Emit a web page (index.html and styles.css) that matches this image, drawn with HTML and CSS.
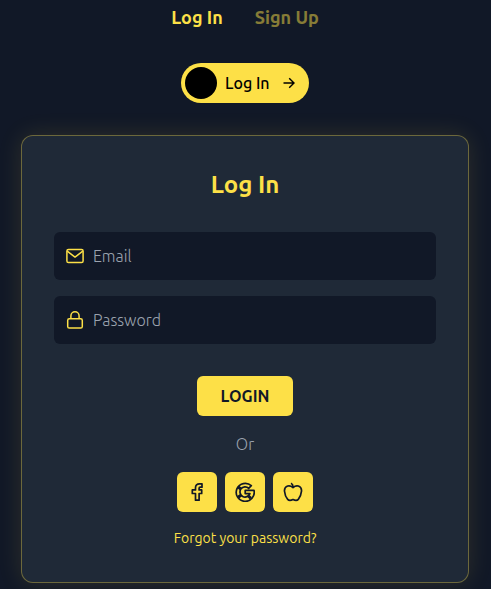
FILE: index.html
```html
<!DOCTYPE html>
<html lang="en">
<head>
<meta charset="utf-8">
<meta name="viewport" content="width=device-width, initial-scale=1">
<title>Log In</title>
<link rel="stylesheet" href="styles.css">
</head>
<body>
<main class="page">
  <nav class="tabs">
    <a class="tab tab-active" href="#login">Log In</a>
    <a class="tab" href="#signup">Sign Up</a>
  </nav>
  <button class="switch" type="button">
    <span class="knob"></span>
    <span class="switch-label">Log In</span>
    <svg class="arrow" viewBox="0 0 16 16" aria-hidden="true"><path d="M2.500 8h10.500M8.200 3.200 13 8l-4.800 4.800"/></svg>
  </button>
  <form class="card" id="login">
    <h1 class="title">Log In</h1>
    <div class="fields">
      <label class="field">
        <svg class="icon" viewBox="0 0 20 20" aria-hidden="true"><rect x="1.900" y="3.400" width="16.200" height="13.200" rx="1.600"/><path d="m2.200 5.200 7.800 5.900 7.800-5.900"/></svg>
        <input class="input" type="email" placeholder="Email" aria-label="Email">
      </label>
      <label class="field">
        <svg class="icon" viewBox="0 0 20 20" aria-hidden="true"><rect x="2.700" y="8.800" width="14.600" height="9.200" rx="1.600"/><path d="M5.900 8.800V5.900a4.100 4.100 0 0 1 8.200 0v2.900"/></svg>
        <input class="input" type="password" placeholder="Password" aria-label="Password">
      </label>
    </div>
    <button class="submit" type="submit">LOGIN</button>
    <p class="or">Or</p>
    <div class="socials">
      <button class="social" type="button" aria-label="Facebook">
        <svg class="icon" viewBox="0 0 20 20" aria-hidden="true"><path d="M15 1.800h-2.600c-2.400 0-3.900 1.600-3.900 3.900v2.200H5.300v3.600h3.200v6.700h3.600v-6.700h2.600v-3.600h-2.600V6.300c0-.7.4-1.100 1.100-1.100H15z"/></svg>
      </button>
      <button class="social" type="button" aria-label="Google">
        <svg class="icon" viewBox="0 0 20 20" aria-hidden="true"><path d="M16.300 3.700A9 9 0 1 0 19 8.300h-8.800v3.300h4.700a5.100 5.100 0 1 1-1.200-5.300z"/><path class="seam" d="m3.200 5 2.700 2M3.200 15.200l2.700-2M13.400 14l2.500 2.400"/></svg>
      </button>
      <button class="social" type="button" aria-label="Apple">
        <svg class="icon" viewBox="0 0 20 20" aria-hidden="true"><path d="M10 5.500C8.300 4.100 6.400 3.500 4.700 4 2.400 4.700 1.300 6.700 1.500 9.200c.3 3.100 1.500 6.200 3.200 8.200 1.300 1.500 3.100 1.300 5.300.1 2.200 1.200 4 1.400 5.300-.1 1.700-2 2.900-5.100 3.200-8.200.2-2.500-.9-4.500-3.200-5.200-1.700-.5-3.600.1-5.300 1.500zM10 5.500C10.200 3.500 9.500 2 8 1.300"/></svg>
      </button>
    </div>
    <a class="forgot" href="#forgot">Forgot your password?</a>
  </form>
</main>
</body>
</html>
```
FILE: styles.css
```css
* { box-sizing: border-box; }

body {
  margin: 0;
  background: #111827;
  color: #fde047;
  font-family: Ubuntu, "Noto Sans", "Open Sans", sans-serif;
  font-size: 16px;
  line-height: 24px;
}

button, input { font: inherit; }
button { border: 0; cursor: pointer; }
a { color: inherit; text-decoration: none; }

.page {
  display: flex;
  flex-direction: column;
  align-items: center;
  padding: 4px 17px 6px 16px;
}

.tabs {
  display: flex;
  gap: 32px;
  font-size: 18px;
  font-weight: 700;
  line-height: 27px;
}

.tab { opacity: 0.5; }
.tab-active { opacity: 1; }

.switch {
  display: flex;
  align-items: center;
  gap: 8px;
  width: 128px;
  height: 40px;
  margin: 32px 0;
  padding: 4px 12px 4px 4px;
  border-radius: 20px;
  background: #fde047;
  color: #000;
  font-weight: 500;
  white-space: nowrap;
}

.knob {
  flex: none;
  width: 32px;
  height: 32px;
  border-radius: 50%;
  background: #000;
}

.arrow {
  flex: none;
  width: 16px;
  height: 16px;
  margin-left: auto;
  fill: none;
  stroke: currentColor;
  stroke-width: 1.4;
}

.card {
  display: flex;
  flex-direction: column;
  align-items: center;
  width: 100%;
  max-width: 448px;
  padding: 32px 32px 34px;
  border: 1px solid rgba(253, 224, 71, 0.35);
  border-radius: 12px;
  background: #1f2937;
  box-shadow: 0 0 24px rgba(253, 224, 71, 0.12);
}

.title {
  margin: 0 0 30px;
  font-size: 24px;
  font-weight: 700;
  line-height: 34px;
}

.fields {
  display: grid;
  gap: 16px;
  width: 100%;
}

.field {
  display: flex;
  align-items: center;
  gap: 8px;
  height: 48px;
  padding: 0 11px;
  border-radius: 6px;
  background: #111827;
}

.icon {
  flex: none;
  width: 20px;
  height: 20px;
  fill: none;
  stroke: currentColor;
  stroke-width: 1.5;
  stroke-linejoin: round;
}

.input {
  flex: 1;
  min-width: 0;
  padding: 0;
  border: 0;
  outline: 0;
  background: transparent;
  color: #fff;
  font-weight: 300;
}

.input::placeholder { color: #9ca3af; opacity: 1; }

.submit {
  height: 40px;
  margin: 32px 0 16px;
  padding: 0 24px;
  border-radius: 6px;
  background: #fde047;
  color: #111827;
  font-weight: 700;
}

.or {
  margin: 0 0 16px;
  color: #9ca3af;
  font-weight: 300;
}

.socials {
  display: flex;
  gap: 8px;
}

.social {
  display: grid;
  place-items: center;
  width: 40px;
  height: 40px;
  padding: 0;
  border-radius: 6px;
  background: #fde047;
  color: #111827;
}

.social .icon { stroke-width: 1.7; }
.social .seam { stroke-width: 3; }

.forgot {
  margin-top: 16px;
  font-size: 14px;
  font-weight: 400;
  line-height: 20px;
}
```
